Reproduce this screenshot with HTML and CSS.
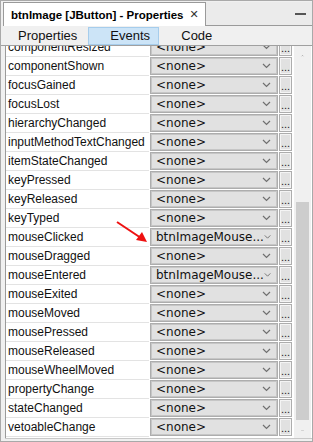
FILE: index.html
```html
<!DOCTYPE html>
<html lang="en">
<head>
    <meta charset="UTF-8">
    <meta name="viewport" content="width=device-width, initial-scale=1.0">
    <title>btnImage - Properties</title>
    <link rel="stylesheet" href="styles.css">
</head>
<body>
    <div class="window">
        <div class="titlebar">
            <div class="title-tab">
                <span class="title-text">btnImage [JButton] - Properties</span>
                <span class="close">&#x2715;</span>
            </div>
            <div class="title-rest">
                <span class="minimize"></span>
            </div>
        </div>

        <div class="tabs">
            <span class="tab">Properties</span>
            <span class="tab active">Events</span>
            <span class="tab">Code</span>
        </div>

        <div class="sheet">
            <div class="grid">
                <div class="rows" id="rows"></div>
            </div>
            <div class="scrollbar">
                <svg class="arrow-up" width="9" height="6" viewBox="0 0 9 6"><polyline points="1,5 4.5,1.5 8,5" fill="none" stroke="#606060" stroke-width="1.6"/></svg>
                <div class="track">
                    <div class="thumb"></div>
                </div>
                <svg class="arrow-down" width="9" height="6" viewBox="0 0 9 6"><polyline points="1,1 4.5,4.5 8,1" fill="none" stroke="#606060" stroke-width="1.6"/></svg>
            </div>
        </div>
        <div class="bottom"></div>

        <svg class="pointer" width="40" height="30" viewBox="0 0 40 30">
            <line x1="2" y1="2" x2="26" y2="18" stroke="#ee1111" stroke-width="2"/>
            <polygon points="32,22 21,20 27,12" fill="#ee1111"/>
        </svg>
    </div>

    <script>
        var events = [
            ["componentResized", "<none>"],
            ["componentShown", "<none>"],
            ["focusGained", "<none>"],
            ["focusLost", "<none>"],
            ["hierarchyChanged", "<none>"],
            ["inputMethodTextChanged", "<none>"],
            ["itemStateChanged", "<none>"],
            ["keyPressed", "<none>"],
            ["keyReleased", "<none>"],
            ["keyTyped", "<none>"],
            ["mouseClicked", "btnImageMouse..."],
            ["mouseDragged", "<none>"],
            ["mouseEntered", "btnImageMouse..."],
            ["mouseExited", "<none>"],
            ["mouseMoved", "<none>"],
            ["mousePressed", "<none>"],
            ["mouseReleased", "<none>"],
            ["mouseWheelMoved", "<none>"],
            ["propertyChange", "<none>"],
            ["stateChanged", "<none>"],
            ["vetoableChange", "<none>"]
        ];

        var rows = document.getElementById("rows");
        var chevron = '<svg width="9" height="6" viewBox="0 0 9 6"><polyline points="1,1 4.5,4.5 8,1" fill="none" stroke="#707070" stroke-width="1.2"/></svg>';

        events.forEach(function (ev) {
            var row = document.createElement("div");
            row.className = "row";

            var name = document.createElement("div");
            name.className = "name";
            name.textContent = ev[0];

            var value = document.createElement("div");
            value.className = "value";
            var combo = document.createElement("div");
            combo.className = "combo";
            var text = document.createElement("span");
            text.className = "combo-text";
            text.textContent = ev[1];
            combo.appendChild(text);
            combo.insertAdjacentHTML("beforeend", chevron);

            var dots = document.createElement("div");
            dots.className = "dots";
            dots.textContent = "...";

            value.appendChild(combo);
            value.appendChild(dots);
            row.appendChild(name);
            row.appendChild(value);
            rows.appendChild(row);
        });
    </script>
</body>
</html>
```

FILE: styles.css
```css
*{
    margin: 0;
    padding: 0;
    box-sizing: border-box;
}
body{
    font-family: "Liberation Sans", Arial, sans-serif;
    background-color: #ffffff;
}
.window{
    position: relative;
    width: 313px;
    height: 442px;
    border: 1px solid #a9a9a9;
    background-color: #f0f0f0;
    display: flex;
    flex-direction: column;
    overflow: hidden;
}
.titlebar{
    display: flex;
    height: 24px;
    margin-top: 1px;
}
.title-tab{
    display: flex;
    align-items: center;
    margin-left: 2px;
    width: 203px;
    border: 1px solid #9a9a9a;
    border-bottom: none;
    background-color: #ffffff;
    padding-left: 7px;
    white-space: nowrap;
}
.title-text{
    font-size: 11.5px;
    font-weight: bold;
    color: #000000;
    white-space: nowrap;
}
.close{
    margin-left: 6px;
    font-size: 11px;
    color: #333333;
    font-family: "DejaVu Sans", sans-serif;
}
.title-rest{
    flex: 1;
    display: flex;
    justify-content: flex-end;
    align-items: center;
    border-bottom: 1px solid #9a9a9a;
    background-color: #ebebeb;
    padding-right: 6px;
}
.minimize{
    width: 11px;
    height: 2px;
    background-color: #555555;
}
.tabs{
    display: flex;
    height: 20px;
    padding-top: 1px;
    padding-left: 3px;
    border-bottom: 1px solid #a0a0a0;
    background-color: #f0f0f0;
}
.tab{
    font-size: 13px;
    color: #111111;
    height: 18px;
    line-height: 16px;
    padding: 0 12px 0 13px;
    border: 1px solid transparent;
}
.tab.active{
    background-color: #cce4f7;
    border-color: #a6cdec;
    width: 71px;
    padding-left: 21px;
    margin-left: -2px;
}
.tab:last-child{
    padding-left: 21px;
}
.sheet{
    display: flex;
    height: 392px;
    margin-left: 4px;
    border-left: 1px solid #9a9a9a;
    background-color: #ffffff;
}
.grid{
    width: 287px;
    overflow: hidden;
}
.rows{
    margin-top: -8px;
}
.row{
    display: flex;
    height: 19px;
}
.name{
    width: 143px;
    padding-left: 2px;
    font-size: 12px;
    line-height: 18px;
    color: #111111;
    border-bottom: 1px solid #e3e3e3;
    white-space: nowrap;
    overflow: hidden;
}
.value{
    display: flex;
    flex: 1;
    padding: 0 0 1px 1px;
}
.combo{
    display: flex;
    align-items: center;
    justify-content: space-between;
    width: 128px;
    height: 18px;
    background-color: #e1e1e1;
    border: 1px solid #adadad;
    box-shadow: inset 0 0 0 1px #c6c6c6;
    padding: 0 6px 0 5px;
}
.combo-text{
    font-family: "DejaVu Sans", sans-serif;
    font-size: 12px;
    color: #111111;
    white-space: nowrap;
}
.dots{
    width: 13px;
    height: 18px;
    margin-left: 1px;
    background-color: #e1e1e1;
    border: 1px solid #adadad;
    box-shadow: inset 0 0 0 1px #f4f4f4;
    font-size: 11px;
    line-height: 18px;
    text-align: center;
    color: #222222;
}
.scrollbar{
    display: flex;
    flex-direction: column;
    align-items: center;
    width: 17px;
    margin-left: 1px;
    background-color: #f0f0f0;
}
.arrow-up{
    margin-top: 9px;
}
.track{
    flex: 1;
    width: 100%;
    padding: 145px 2px 10px 2px;
}
.thumb{
    height: 218px;
    background-color: #cdcdcd;
}
.arrow-down{
    margin-bottom: 7px;
}
.bottom{
    flex: 1;
    border-top: 1px solid #c8c8c8;
    margin-left: 4px;
}
.pointer{
    position: absolute;
    left: 114px;
    top: 219px;
}
```
